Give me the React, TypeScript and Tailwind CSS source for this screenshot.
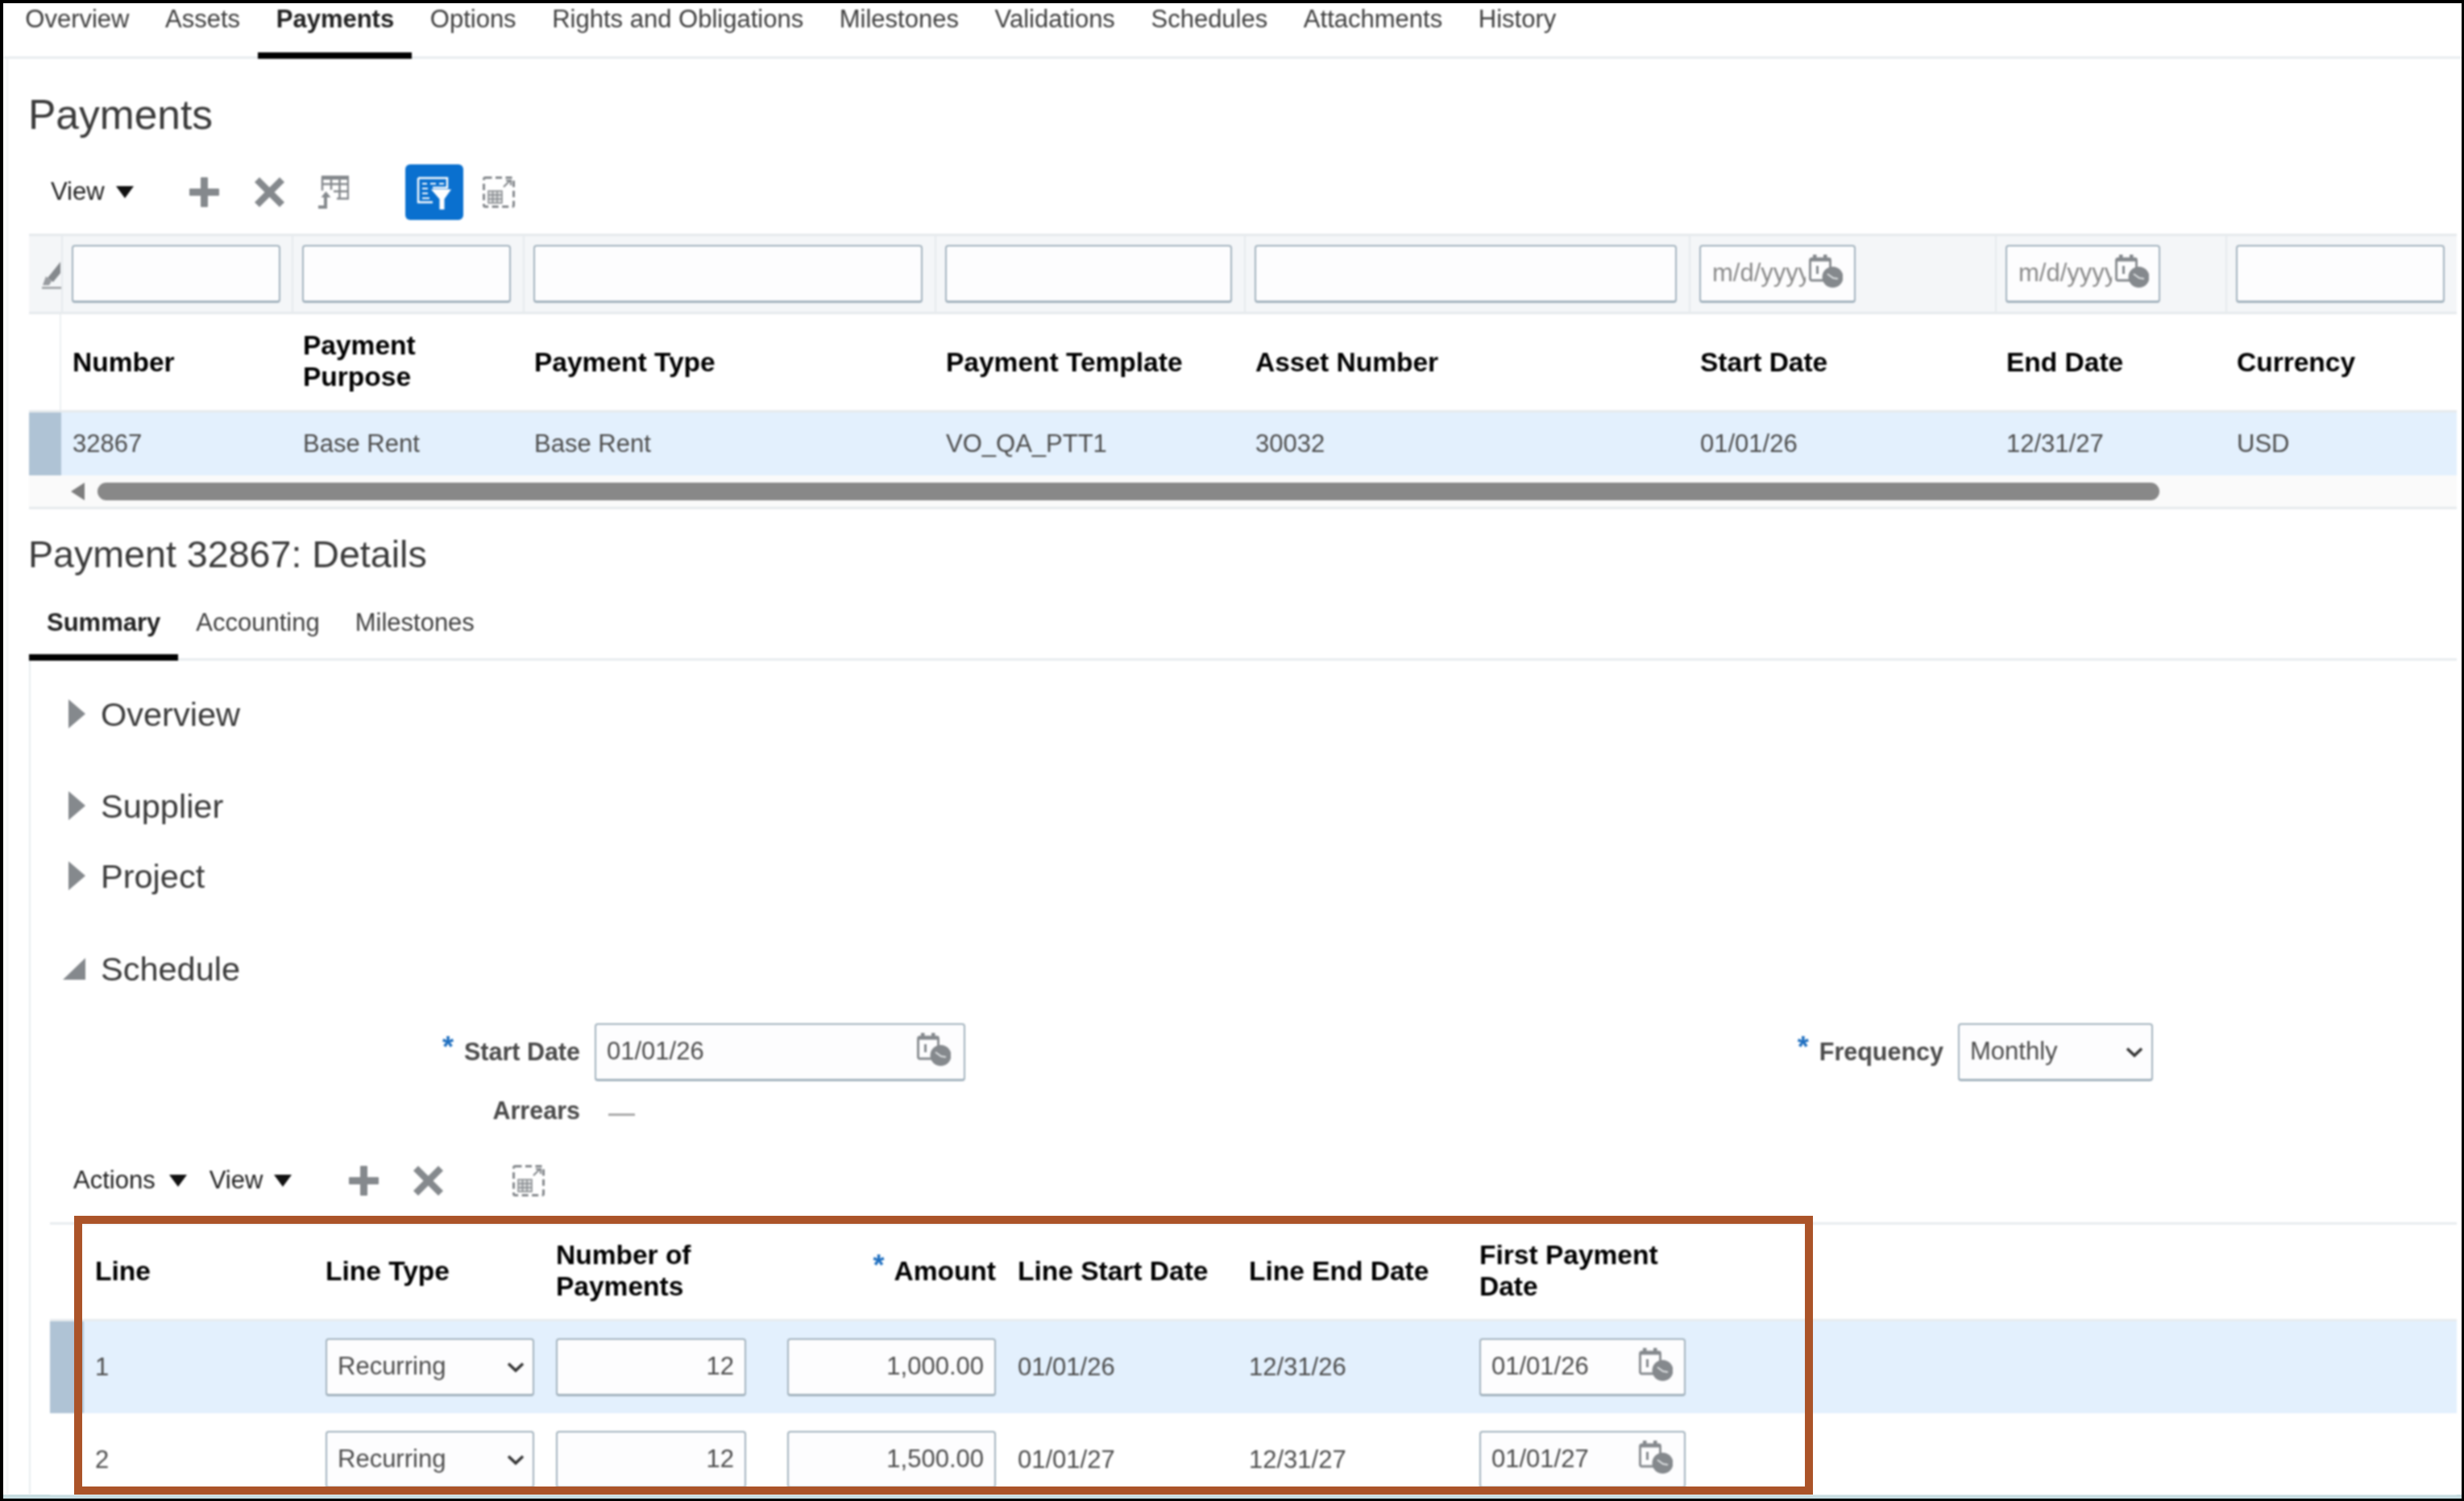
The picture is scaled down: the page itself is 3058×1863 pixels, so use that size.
import React from "react";

const G = "#85898d";

function CalIcon({ className = "" }: { className?: string }) {
  return (
    <svg className={`mb-[8px] ${className}`} width="42" height="42" viewBox="0 0 42 42" fill="none">
      <rect x="1.5" y="6" width="25" height="27" rx="2" stroke={G} strokeWidth="2.800" />
      <rect x="5" y="1" width="4.500" height="8" fill={G} />
      <rect x="18" y="1" width="4.500" height="8" fill={G} />
      <rect x="1" y="6" width="26" height="3.500" fill={G} />
      <rect x="9" y="15" width="3" height="10" fill={G} />
      <circle cx="29.500" cy="29" r="13" fill={G} />
      <path d="M23 25l7 5 6 1" stroke="#dfe2e4" strokeWidth="2" />
    </svg>
  );
}

function Plus({ className = "" }: { className?: string }) {
  return (
    <svg className={className} width="37" height="37" viewBox="0 0 37 37" fill={G}>
      <rect x="14" y="0" width="9" height="37" rx="1" />
      <rect x="0" y="14" width="37" height="9" rx="1" />
    </svg>
  );
}

function Cross({ className = "" }: { className?: string }) {
  return (
    <svg className={className} width="37" height="37" viewBox="0 0 37 37" fill={G}>
      <path d="M6 0l12.500 12.500L31 0l6 6-12.500 12.500L37 31l-6 6-12.500-12.500L6 37l-6-6 12.500-12.500L0 6z" />
    </svg>
  );
}

function ExportIcon({ className = "" }: { className?: string }) {
  return (
    <svg className={className} width="39" height="41" viewBox="0 0 39 41" fill="none" stroke={G} strokeWidth="2.500">
      <path d="M6 1.500h32v27H24" />
      <rect x="5" y="0" width="34" height="5" fill={G} stroke="none" />
      <path d="M6 1.500v17M17 1.500v16M27.500 1.500v27M6 10.500h32M20 19.500h18" />
      <path d="M1 39h9v-14" strokeWidth="4" />
      <path d="M4.500 27l6-7.500 6 7.500z" fill={G} stroke="none" />
    </svg>
  );
}

function FilterIcon() {
  return (
    <svg width="72" height="69" viewBox="0 0 72 69" fill="none">
      <path d="M16 17h36v12H34M16 17v30h18" stroke="#fff" strokeWidth="2.400" />
      <path d="M21 24h6M31 24h7M42 24h6M21 30h7M21 36h7M21 42h9" stroke="#fff" strokeWidth="2" />
      <path d="M32 31h25L48.500 43v13h-6V43z" fill="#fff" />
    </svg>
  );
}

function FitIcon({ className = "" }: { className?: string }) {
  return (
    <svg className={className} width="40" height="39" viewBox="0 0 40 39" fill="none" stroke={G}>
      <rect x="1.500" y="1.500" width="37" height="36" rx="2" strokeWidth="3" strokeDasharray="8 4.500" />
      <path d="M26 13l8-8M29 5h6v6" strokeWidth="2.200" />
      <rect x="7" y="18" width="17" height="15" fill="#dcdedf" strokeWidth="1.500" />
      <path d="M7 23h17M7 28h17M12.500 18v15M18 18v15" strokeWidth="1.500" />
    </svg>
  );
}

function Eraser() {
  return (
    <svg width="24" height="34" viewBox="0 0 24 34" fill={G}>
      <path d="M23 0v14l-9 11-7-5z" />
      <path d="M5 18l7 6-3 5H1z" fill="#999ca0" />
      <rect x="0" y="31" width="24" height="2.500" fill="#9a9da0" />
    </svg>
  );
}

function Chevron() {
  return (
    <svg width="22" height="14" viewBox="0 0 22 14" fill="none" stroke="#333" strokeWidth="3.500">
      <path d="M2 2.500l9 8.500 9-8.500" />
    </svg>
  );
}

function Caret({ className = "" }: { className?: string }) {
  return (
    <svg className={className} width="22" height="15" viewBox="0 0 22 15" fill="#111">
      <path d="M0 0h22L11 15z" />
    </svg>
  );
}

const inputCls =
  "flex items-center h-[72px] rounded-[4px] border-2 border-b-[3px] border-[#a3b3be] bg-[#fdfdfe] px-[13px] text-[31px] text-[#4d4d4d] whitespace-nowrap";

function FilterBox({ w }: { w: string }) {
  return <div className={`${w} h-[72px] rounded-[4px] border-2 border-b-[3px] border-[#a3b3be] bg-[#fdfdfe]`} />;
}

function FilterDate({ w }: { w: string }) {
  return (
    <div className={`${w} h-[72px] rounded-[4px] border-2 border-b-[3px] border-[#a3b3be] bg-[#fdfdfe] flex items-center pl-[14px]`}>
      <div className="w-[116px] shrink-0 overflow-hidden whitespace-nowrap text-[31px] text-[#8a8a8a]">m/d/yyyy</div>
      <CalIcon className="ml-[4px] shrink-0" />
    </div>
  );
}

const fcell = "flex items-center pl-[11px] border-l-2 border-[#e6eaed]";
const grid1 = "grid grid-cols-[40px_286px_287px_511px_384px_552px_380px_286px_287px]";
const grid2 = "grid grid-cols-[42px_286px_286px_287px_286px_286px_286px_287px_942px]";

function PaymentsTable() {
  const heads = ["Number", "Payment\nPurpose", "Payment Type", "Payment Template", "Asset Number", "Start Date", "End Date", "Currency"];
  const vals = ["32867", "Base Rent", "Base Rent", "VO_QA_PTT1", "30032", "01/01/26", "12/31/27", "USD"];
  return (
    <div>
      <div className={`${grid1} h-[100px] bg-[#f4f6f8] border-y-[3px] border-[#e6eaed]`}>
        <div className="flex items-center justify-end pt-[4px]">
          <Eraser />
        </div>
        <div className={fcell}><FilterBox w="w-[259px]" /></div>
        <div className={fcell}><FilterBox w="w-[259px]" /></div>
        <div className={fcell}><FilterBox w="w-[483px]" /></div>
        <div className={fcell}><FilterBox w="w-[356px]" /></div>
        <div className={fcell}><FilterBox w="w-[524px]" /></div>
        <div className={fcell}><FilterDate w="w-[194px]" /></div>
        <div className={fcell}><FilterDate w="w-[192px]" /></div>
        <div className={fcell}><FilterBox w="w-[259px]" /></div>
      </div>
      <div className={`${grid1} h-[122px] border-b-[3px] border-[#e6eaed]`}>
        <div className="border-r-2 border-[#edf0f2]" />
        {heads.map((h) => (
          <div key={h} className={`flex items-center pl-[14px] pb-[1px] text-[33.500px] leading-[39px] font-bold text-black whitespace-pre-line ${h.includes("\n") ? "pb-[3px]" : ""}`}>
            {h}
          </div>
        ))}
      </div>
      <div className={`${grid1} h-[78px] bg-[#e3f0fd]`}>
        <div className="bg-[#afc3d5]" />
        {vals.map((v, i) => (
          <div key={i} className="flex items-center pl-[14px] text-[31px] text-[#4d4d4d]">{v}</div>
        ))}
      </div>
      <div className="flex items-center h-[42px] bg-[#fafafa] border-b-[3px] border-[#e6eaed] pl-[52px]">
        <div className="w-0 h-0 border-y-[11px] border-y-transparent border-r-[17px] border-r-[#7d7d7d]" />
        <div className="ml-[16px] w-[2559px] h-[22px] rounded-full bg-[#888888]" />
      </div>
    </div>
  );
}

function Section({ label, open, cls }: { label: string; open?: boolean; cls: string }) {
  return (
    <div className={`flex items-center h-[60px] pl-[40px] ${cls}`}>
      <div className="w-[28px] flex justify-end">
        {open ? (
          <div className="w-0 h-0 border-l-[28px] border-l-transparent border-b-[27px] border-b-[#85898d]" />
        ) : (
          <div className="w-0 h-0 border-y-[18px] border-y-transparent border-l-[21px] border-l-[#85898d]" />
        )}
      </div>
      <div className="ml-[19px] mt-[3px] text-[41.500px] text-[#3a3a3a]">{label}</div>
    </div>
  );
}

function Star({ cls = "" }: { cls?: string }) {
  return <span className={`text-[#1f6fc0] text-[36px] font-bold leading-none -translate-y-[6px] ${cls}`}>*</span>;
}

function LinesTable() {
  const rows = [
    { n: "1", num: "12", amt: "1,000.00", s: "01/01/26", e: "12/31/26", f: "01/01/26", bg: "bg-[#e3f0fd]", sel: "bg-[#afc3d5]", pad: "" },
    { n: "2", num: "12", amt: "1,500.00", s: "01/01/27", e: "12/31/27", f: "01/01/27", bg: "bg-white", sel: "", pad: "pt-[2px]" },
  ];
  return (
    <div className="ml-[24px]">
      <div className={`${grid2} h-[123px] pb-[3px] border-t-[3px] border-b-[3px] border-[#e8ecef] text-[33.500px] leading-[39px] font-bold text-black`}>
        <div />
        <div className="flex items-center pl-[14px]">Line</div>
        <div className="flex items-center pl-[14px]">Line Type</div>
        <div className="flex items-center pl-[14px]">Number of<br />Payments</div>
        <div className="flex items-center justify-end pr-[13px]">
          <Star cls="mr-[12px]" />
          Amount
        </div>
        <div className="flex items-center pl-[14px] whitespace-nowrap">Line Start Date</div>
        <div className="flex items-center pl-[15px] whitespace-nowrap">Line End Date</div>
        <div className="flex items-center pl-[15px]">First Payment<br />Date</div>
        <div />
      </div>
      {rows.map((r) => (
        <div key={r.n} className={`${grid2} h-[114px] ${r.bg} ${r.pad} text-[31px] text-[#4d4d4d]`}>
          <div className={r.sel} />
          <div className="flex items-center pl-[14px]">{r.n}</div>
          <div className="flex items-center pl-[14px]">
            <div className={`${inputCls} w-[259px] justify-between pr-[10px]`}>
              <span>Recurring</span>
              <Chevron />
            </div>
          </div>
          <div className="flex items-center pl-[14px]">
            <div className={`${inputCls} w-[236px] justify-end`}>{r.num}</div>
          </div>
          <div className="flex items-center pl-[14px]">
            <div className={`${inputCls} w-[259px] justify-end`}>{r.amt}</div>
          </div>
          <div className="flex items-center pl-[14px]">{r.s}</div>
          <div className="flex items-center pl-[15px]">{r.e}</div>
          <div className="flex items-center pl-[15px]">
            <div className={`${inputCls} w-[256px] justify-between pr-[14px]`}>
              <span>{r.f}</span>
              <CalIcon />
            </div>
          </div>
          <div />
        </div>
      ))}
    </div>
  );
}

export default function App() {
  const tabs = ["Overview", "Assets", "Payments", "Options", "Rights and Obligations", "Milestones", "Validations", "Schedules", "Attachments", "History"];
  return (
    <div className="relative flex flex-col w-[3058px] h-[1863px] overflow-hidden bg-white border-t-[4px] border-l-[4px] border-r-[3px] border-b-[3px] border-black font-['Liberation_Sans',Arial,sans-serif]">
      <div className="flex flex-col flex-1 min-h-0 overflow-hidden [filter:blur(0.8px)]">
        {/* Main tabs */}
        <div className="flex shrink-0 h-[69px] pl-[5px] border-b-[3px] border-[#e8ecef]">
          {tabs.map((t) => (
            <div
              key={t}
              className={
                t === "Payments"
                  ? "h-[69px] px-[22.300px] leading-[40px] text-[31px] font-bold text-[#222] border-b-[8px] border-black"
                  : "h-[69px] px-[22.300px] leading-[40px] text-[31px] text-[#404040]"
              }
            >
              {t}
            </div>
          ))}
        </div>

        <div className="flex flex-col flex-1 min-h-0 overflow-hidden ml-[4px] border-l-2 border-[#eef0f2] pl-[26px] pr-[6px]">
          <div className="pt-[39px] leading-[60px] text-[51.500px] text-[#3a3a3a] -ml-[1px]">Payments</div>

          {/* Toolbar */}
          <div className="flex items-center h-[70px] mt-[31px] pl-[27px]">
            <span className="text-[31px] text-[#222]">View</span>
            <Caret className="ml-[14px]" />
            <Plus className="ml-[69px]" />
            <Cross className="ml-[44px]" />
            <ExportIcon className="ml-[41px]" />
            <div className="ml-[70px] w-[72px] h-[69px] rounded-[6px] bg-[#0a70cf]">
              <FilterIcon />
            </div>
            <FitIcon className="ml-[24px]" />
          </div>

          <div className="mt-[17px]">
            <PaymentsTable />
          </div>

          <div className="mt-[26px] leading-[60px] text-[46.600px] text-[#3a3a3a] -ml-[1px]">Payment 32867: Details</div>

          {/* Sub tabs */}
          <div className="flex h-[102px] shrink-0 border-b-[3px] border-[#e8ecef]">
            <div className="h-[102px] px-[22px] pt-[35px] leading-[40px] text-[31px] font-bold text-[#222] border-b-[8px] border-black">Summary</div>
            <div className="h-[102px] px-[22px] pt-[35px] leading-[40px] text-[31px] text-[#404040]">Accounting</div>
            <div className="h-[102px] px-[22px] pt-[35px] leading-[40px] text-[31px] text-[#404040]">Milestones</div>
          </div>

          {/* Summary body */}
          <div className="flex-1 min-h-0 overflow-hidden border-l-2 border-[#e8ecef]">
            <Section label="Overview" cls="mt-[36px]" />
            <Section label="Supplier" cls="mt-[54px]" />
            <Section label="Project" cls="mt-[27px]" />
            <Section label="Schedule" open cls="mt-[55px]" />

            <div className="flex items-center mt-[38px] h-[72px]">
              <div className="w-[682px] flex justify-end items-center text-[30.500px] font-bold text-[#4a4a4a]">
                <Star cls="mr-[13px]" />
                Start Date
              </div>
              <div className={`${inputCls} ml-[18px] w-[460px] justify-between pr-[16px]`}>
                <span>01/01/26</span>
                <CalIcon />
              </div>
              <div className="w-[1214px] flex justify-end items-center text-[30.500px] font-bold text-[#4a4a4a]">
                <Star cls="mr-[13px]" />
                Frequency
              </div>
              <div className={`${inputCls} ml-[18px] w-[242px] justify-between pr-[10px]`}>
                <span>Monthly</span>
                <Chevron />
              </div>
            </div>

            <div className="flex items-center mt-[18px] h-[40px]">
              <div className="w-[682px] pb-[3px] text-right text-[30.500px] font-bold text-[#4a4a4a]">Arrears</div>
              <div className="ml-[35px] mt-[6px] w-[33px] h-[3px] bg-[#a9a9a9]" />
            </div>

            <div className="flex items-center mt-[35px] h-[60px] pl-[53px]">
              <span className="text-[31px] text-[#222]">Actions</span>
              <Caret className="ml-[17px]" />
              <span className="ml-[28px] text-[31px] text-[#222]">View</span>
              <Caret className="ml-[14px]" />
              <Plus className="ml-[71px]" />
              <Cross className="ml-[43px]" />
              <FitIcon className="ml-[86px]" />
            </div>

            <div className="mt-[22px]">
              <LinesTable />
            </div>
          </div>
        </div>
      </div>

      <div className="shrink-0 h-[5px] bg-[#c7dde1]" />

      {/* Callout rectangle over the lines table */}
      <div className="absolute left-[88px] top-[1505px] w-[2158px] h-[346px] border-[10px] border-[#ab5429]" />
    </div>
  );
}
